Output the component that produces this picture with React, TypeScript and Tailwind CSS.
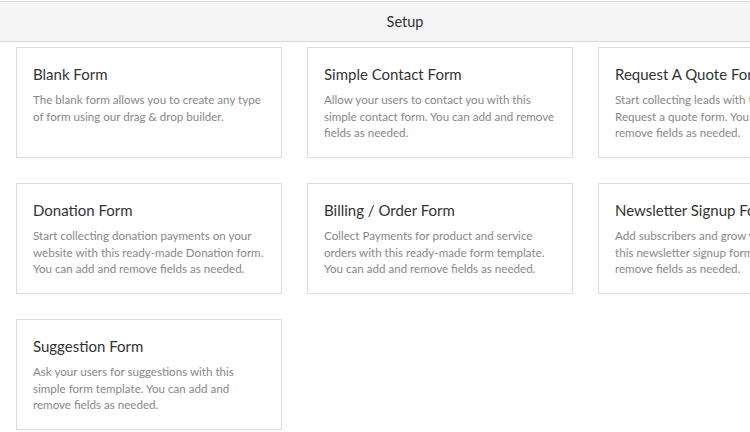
const forms = [
  {
    title: "Blank Form",
    desc: "The blank form allows you to create any type of form using our drag & drop builder.",
  },
  {
    title: "Simple Contact Form",
    desc: "Allow your users to contact you with this simple contact form. You can add and remove fields as needed.",
  },
  {
    title: "Request A Quote Form",
    desc: "Start collecting leads with this pre-made Request a quote form. You can add and remove fields as needed.",
  },
  {
    title: "Donation Form",
    desc: "Start collecting donation payments on your website with this ready-made Donation form. You can add and remove fields as needed.",
  },
  {
    title: "Billing / Order Form",
    desc: "Collect Payments for product and service orders with this ready-made form template. You can add and remove fields as needed.",
  },
  {
    title: "Newsletter Signup Form",
    desc: "Add subscribers and grow your email list with this newsletter signup form. You can add and remove fields as needed.",
  },
  {
    title: "Suggestion Form",
    desc: "Ask your users for suggestions with this simple form template. You can add and remove fields as needed.",
  },
]

export default function App() {
  return (
    <div
      className="w-[750px] h-[432px] overflow-hidden bg-white"
      style={{ fontFamily: 'Lato, "Noto Sans", sans-serif' }}
    >
      <div className="h-[41px] mt-px border-t border-b border-[#dcdcdc] bg-[#f5f5f5] flex items-center justify-center pl-[60px] text-[14.5px] text-[#333]">
        Setup
      </div>
      <div className="grid grid-cols-[266px_266px_266px] gap-[25px] pl-4 pt-[5px] w-[900px]">
        {forms.map((f) => (
          <div key={f.title} className="h-[111px] border border-[#dcdcdc] bg-white pl-4 pr-[15px] pt-[16px] overflow-hidden">
            <div className="text-[15px] leading-[20px] text-[#333] whitespace-nowrap">{f.title}</div>
            <p className="mt-[8px] text-[11.6px] leading-[16.5px] text-[#888]">{f.desc}</p>
          </div>
        ))}
      </div>
    </div>
  )
}
